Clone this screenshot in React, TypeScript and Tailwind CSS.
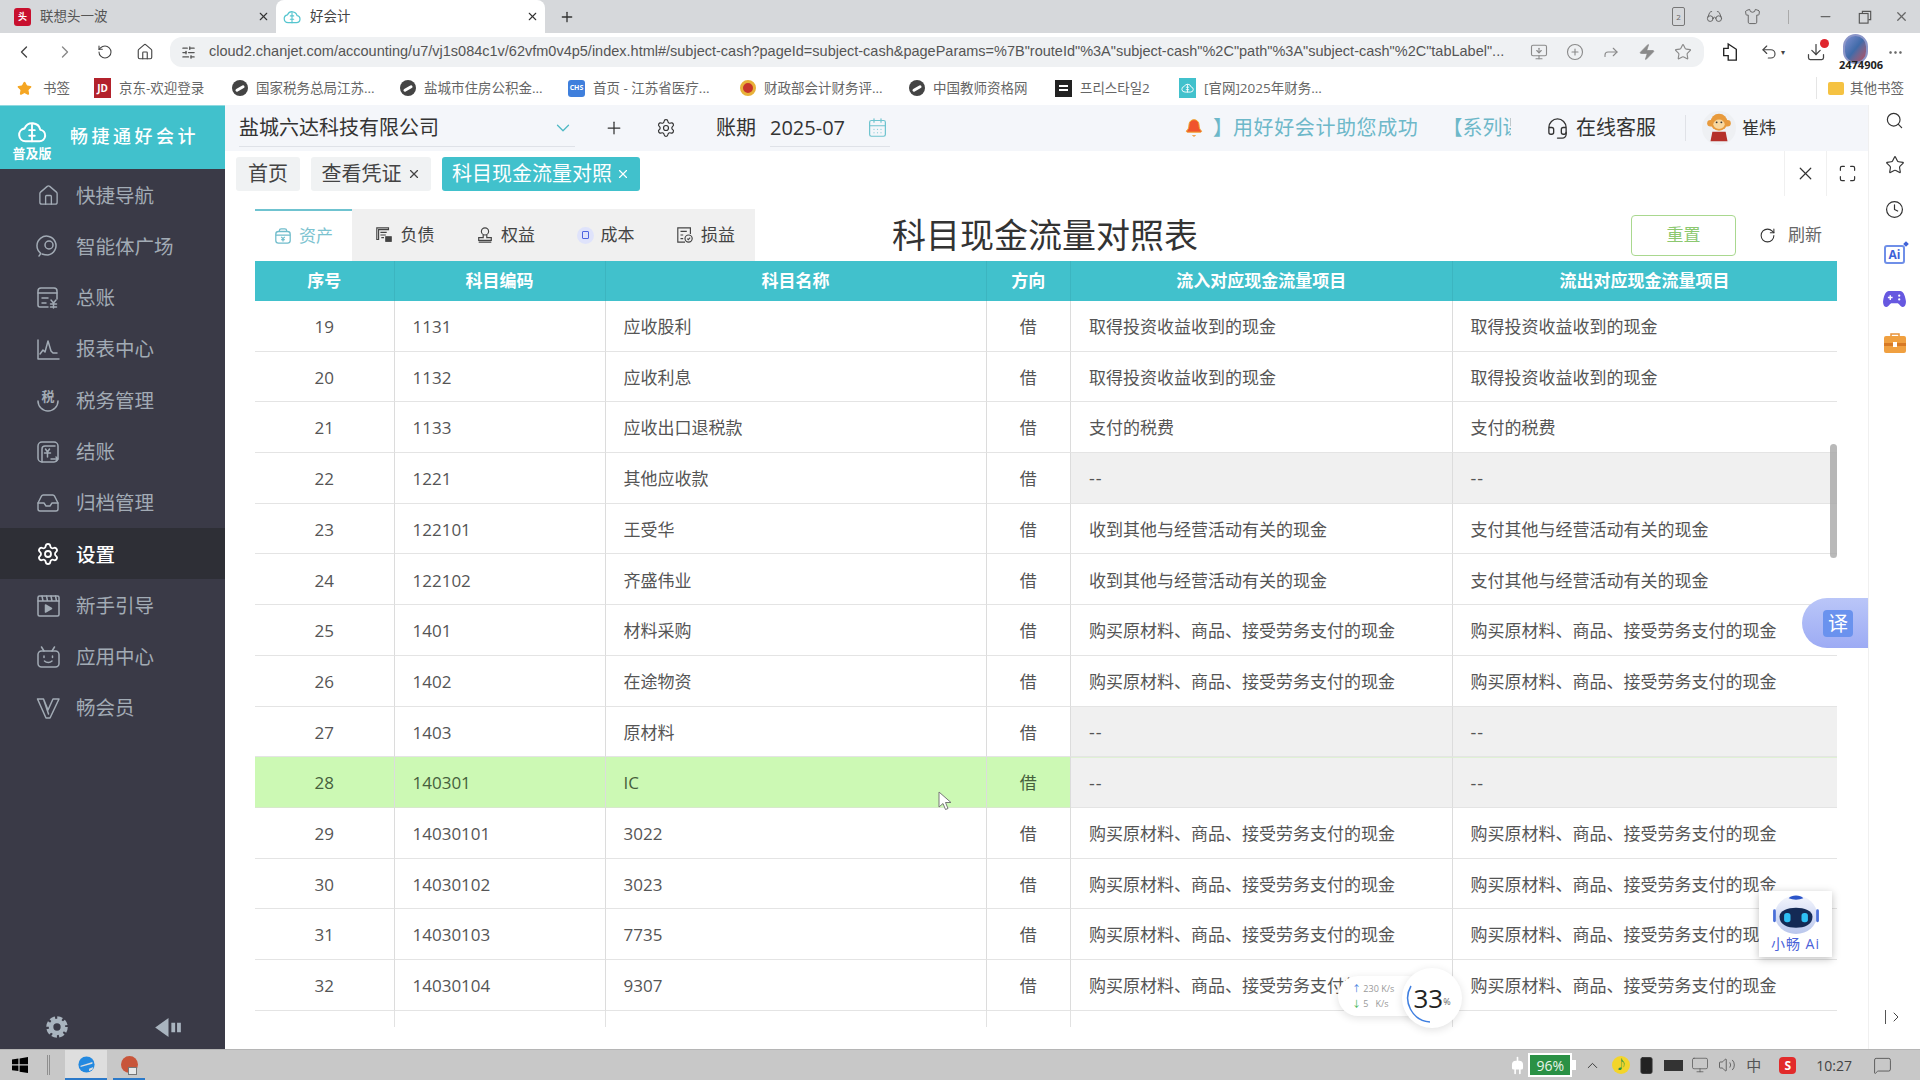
import React from "react";
import {
  Bell,
  CalendarDays,
  ChevronDown,
  ChevronLeft,
  ChevronRight,
  ChevronUp,
  CirclePlus,
  Clock,
  Download,
  Ellipsis,
  Forward,
  Glasses,
  Headset,
  House,
  Inbox,
  Maximize,
  MessageSquare,
  Minus,
  Monitor,
  MonitorDown,
  Plug,
  Plus,
  RotateCw,
  Search,
  Settings,
  Shirt,
  SlidersHorizontal,
  Smartphone,
  Star,
  Undo2,
  Volume2,
  X,
  Zap,
} from "lucide-react";

const FONT = "[font-family:'Open_Sans','Noto_Sans_CJK_SC','Noto_Sans_CJK_KR',sans-serif]";

const CloudMark = ({ className, stroke }: { className: string; stroke: string }) => (
  <svg viewBox="0 0 32 28" className={className} fill="none" stroke={stroke} strokeWidth="2.2" strokeLinecap="round" strokeLinejoin="round">
    <path d="M9 24a7 7 0 0 1-1-13.9A9 9 0 0 1 25 11.5 6.3 6.3 0 0 1 24 24Z" />
    <path d="M16 6v18M13 12h6M13 18h6" strokeWidth="2" />
  </svg>
);

const ic = { fill: "none", stroke: "currentColor", strokeWidth: 1.5, strokeLinecap: "round", strokeLinejoin: "round" } as const;

const navIcons: Record<string, React.ReactNode> = {
  home: <House size={23} strokeWidth={1.4} />,
  agent: (
    <svg viewBox="0 0 24 24" className="w-[24px] h-[24px]" {...ic}>
      <path d="M3 22c1-1 1.5-2 1.5-3A9.5 9.5 0 1 1 12 21c-2 0-4-.3-6-1" />
      <circle cx="13" cy="11" r="4" />
    </svg>
  ),
  ledger: (
    <svg viewBox="0 0 24 24" className="w-[24px] h-[24px]" {...ic}>
      <path d="M12 21H4a2 2 0 0 1-2-2V5a3 3 0 0 1 3-3h13a3 3 0 0 1 3 3v8" />
      <path d="M2 7h19M6 12h6M6 17h4M15 14l2.5 3 2.5-3M14.5 18h6M14.500 21h6M17.500 17v5" />
    </svg>
  ),
  report: (
    <svg viewBox="0 0 24 24" className="w-[24px] h-[24px]" {...ic}>
      <path d="M2 3v19h21" />
      <path d="M4 17l3-4 2 2 3-11 3 10 2 2h4" />
    </svg>
  ),
  tax: (
    <svg viewBox="0 0 24 24" className="w-[24px] h-[24px]" {...ic}>
      <path d="M2 13a10 10 0 0 0 20 0" />
      <text x="12" y="13" textAnchor="middle" fontSize="13" fontWeight="700" fill="currentColor" stroke="none">税</text>
    </svg>
  ),
  close: (
    <svg viewBox="0 0 24 24" className="w-[24px] h-[24px]" {...ic}>
      <rect x="2" y="2" width="20" height="20" rx="4" />
      <path d="M6 22V9a3 3 0 0 1 3-3h10M9.500 9l2 3 2-3M8.500 13h6M11.500 12v5M15 19h7m-2-2 2 2-2 2" />
    </svg>
  ),
  archive: <Inbox size={24} strokeWidth={1.4} />,
  settings: <Settings size={24} strokeWidth={1.8} />,
  guide: (
    <svg viewBox="0 0 24 24" className="w-[24px] h-[24px]" {...ic}>
      <rect x="2" y="2" width="21" height="20" rx="1.500" />
      <path d="M2 7h21M6 2l1 5M10.500 2l1 5M15 2l1 5M19.500 2l1 5" />
      <path d="M9.500 11l6 3.500-6 3.500Z" fill="currentColor" />
    </svg>
  ),
  app: (
    <svg viewBox="0 0 24 24" className="w-[24px] h-[24px]" {...ic}>
      <rect x="2" y="6" width="21" height="16" rx="3.500" />
      <path d="M8 6 5.500 2M16 6l2.500-4M8 11v1.500M16.500 11v1.500M8.500 16c2 2 5.500 2 7.500 0" />
    </svg>
  ),
  vip: (
    <svg viewBox="0 0 24 24" className="w-[24px] h-[24px]" {...ic}>
      <path d="M1.500 3h6L12 14l5-11h6l-9 19h-4ZM7.500 3l5 15" />
    </svg>
  ),
};

const navItems = [
  { label: "快捷导航", icon: "home" },
  { label: "智能体广场", icon: "agent" },
  { label: "总账", icon: "ledger" },
  { label: "报表中心", icon: "report" },
  { label: "税务管理", icon: "tax" },
  { label: "结账", icon: "close" },
  { label: "归档管理", icon: "archive" },
  { label: "设置", icon: "settings", active: true },
  { label: "新手引导", icon: "guide" },
  { label: "应用中心", icon: "app" },
  { label: "畅会员", icon: "vip" },
];

const Dot = ({ className }: { className: string }) => (
  <span className={`w-[16px] h-[16px] rounded-full flex items-center justify-center shrink-0 ${className}`}>
    <span className="w-[10px] h-[3px] bg-white rounded-full -rotate-[30deg]" />
  </span>
);

const bookmarks = [
  { label: "京东-欢迎登录", cls: "ml-[24px] w-[112px]", icon: <span className="w-[17px] h-[20px] bg-[#b3222c] text-white text-[10px] font-bold flex items-center justify-center shrink-0">JD</span> },
  { label: "国家税务总局江苏...", cls: "ml-[26px] w-[144px]", icon: <Dot className="bg-[#444]" /> },
  { label: "盐城市住房公积金...", cls: "ml-[24px] w-[145px]", icon: <Dot className="bg-[#444]" /> },
  { label: "首页 - 江苏省医疗...", cls: "ml-[23px] w-[148px]", icon: <span className="w-[17px] h-[17px] rounded-[3px] bg-[#3f7fdc] text-white text-[7px] font-bold flex items-center justify-center shrink-0">CHS</span> },
  { label: "财政部会计财务评...", cls: "ml-[24px] w-[146px]", icon: <span className="w-[16px] h-[16px] rounded-full bg-[#c7352a] border-[3px] border-[#e8b23a] shrink-0" /> },
  { label: "中国教师资格网", cls: "ml-[23px] w-[122px]", icon: <Dot className="bg-[#444]" /> },
  { label: "프리스타일2", cls: "ml-[24px] w-[100px]", icon: <span className="w-[17px] h-[17px] bg-[#222] border-2 border-[#222] flex flex-col gap-[2px] justify-center px-[2px] shrink-0"><span className="h-[2px] bg-white" /><span className="h-[2px] bg-white" /></span> },
  { label: "[官网]2025年财务...", cls: "ml-[24px] w-[145px]", icon: <span className="w-[17px] h-[20px] bg-[#41c1cc] flex items-center justify-center shrink-0"><CloudMark className="w-[13px] h-[12px]" stroke="#fff" /></span> },
];

type Row = { no: number; code: string; name: string; flow: string; out: string; empty?: boolean; hit?: boolean };

const INVEST = "取得投资收益收到的现金";
const BUY = "购买原材料、商品、接受劳务支付的现金";
const rows: Row[] = [
  { no: 19, code: "1131", name: "应收股利", flow: INVEST, out: INVEST },
  { no: 20, code: "1132", name: "应收利息", flow: INVEST, out: INVEST },
  { no: 21, code: "1133", name: "应收出口退税款", flow: "支付的税费", out: "支付的税费" },
  { no: 22, code: "1221", name: "其他应收款", flow: "--", out: "--", empty: true },
  { no: 23, code: "122101", name: "王受华", flow: "收到其他与经营活动有关的现金", out: "支付其他与经营活动有关的现金" },
  { no: 24, code: "122102", name: "齐盛伟业", flow: "收到其他与经营活动有关的现金", out: "支付其他与经营活动有关的现金" },
  { no: 25, code: "1401", name: "材料采购", flow: BUY, out: BUY },
  { no: 26, code: "1402", name: "在途物资", flow: BUY, out: BUY },
  { no: 27, code: "1403", name: "原材料", flow: "--", out: "--", empty: true },
  { no: 28, code: "140301", name: "IC", flow: "--", out: "--", empty: true, hit: true },
  { no: 29, code: "14030101", name: "3022", flow: BUY, out: BUY },
  { no: 30, code: "14030102", name: "3023", flow: BUY, out: BUY },
  { no: 31, code: "14030103", name: "7735", flow: BUY, out: BUY },
  { no: 32, code: "14030104", name: "9307", flow: BUY, out: BUY },
];

const GRID = "grid grid-cols-[139.500px_211px_381px_84.500px_381.500px_384px]";

const headers = ["序号", "科目编码", "科目名称", "方向", "流入对应现金流量项目", "流出对应现金流量项目"];

const sheetTabs = [
  { label: "资产", w: "w-[97px]", active: true, icon: (
    <svg viewBox="0 0 20 20" className="w-[18px] h-[18px]" fill="none" stroke="#6fbccb" strokeWidth="1.400">
      <rect x="2" y="5" width="16" height="13" rx="3" /><path d="M6 5V4a2 2 0 0 1 2-2h4a2 2 0 0 1 2 2v1M2 9h16M8 11l2 2 2-2M10 13v3M8 14h4" />
    </svg>
  ) },
  { label: "负债", w: "w-[104px]", icon: (
    <svg viewBox="0 0 20 20" className="w-[20px] h-[18px]" fill="none" stroke="#444" strokeWidth="1.300">
      <path d="M2 2h13v2H4v11H2ZM6 7h7M6 10h6M7 13h3" /><rect x="12" y="12" width="6" height="5" fill="#444" />
    </svg>
  ) },
  { label: "权益", w: "w-[99px]", icon: (
    <svg viewBox="0 0 20 20" className="w-[18px] h-[18px]" fill="none" stroke="#444" strokeWidth="1.300">
      <circle cx="10" cy="6" r="4" /><path d="M8 10v3H3v3h14v-3h-5v-3M3 18h14" />
    </svg>
  ) },
  { label: "成本", w: "w-[101px]", icon: (
    <span className="w-[17px] h-[17px] rounded-full bg-[#dfe3fb] flex items-center justify-center">
      <span className="w-[7px] h-[8px] rounded-[1px] border border-[#4f66e0]" />
    </span>
  ) },
  { label: "损益", w: "w-[99px]", icon: (
    <svg viewBox="0 0 20 20" className="w-[18px] h-[18px]" fill="none" stroke="#444" strokeWidth="1.300">
      <path d="M10 18H2V2h14v7M5 6h7M5 10h3M5 14h3" /><circle cx="14" cy="14" r="4" /><path d="m12.500 14 1.200 1.200 2-2.200" />
    </svg>
  ) },
];

const Robot = () => (
  <svg viewBox="0 0 60 48" className="w-[56px] h-[44px]">
    <defs>
      <linearGradient id="robotShell" x1="0" y1="0" x2="0" y2="1">
        <stop offset="0" stopColor="#f4f6fd" />
        <stop offset="1" stopColor="#b9c6ec" />
      </linearGradient>
    </defs>
    <ellipse cx="30" cy="26" rx="23" ry="21" fill="url(#robotShell)" />
    <path d="M22 8c3-4 13-4 16 0-5 2-11 2-16 0Z" fill="#2c55c9" />
    <path d="M12 28c0-13 36-13 36 0 0 9-9 12-18 12s-18-3-18-12Z" fill="#142a55" />
    <rect x="17" y="24" width="7" height="10" rx="3" fill="#2ec0f5" />
    <rect x="36" y="24" width="7" height="10" rx="3" fill="#2ec0f5" />
    <rect x="5" y="20" width="3" height="14" rx="1.500" fill="#4a6fd8" />
    <rect x="52" y="20" width="3" height="14" rx="1.500" fill="#4a6fd8" />
  </svg>
);

const Monkey = () => (
  <svg viewBox="0 0 36 36" className="w-[34px] h-[34px]">
    <circle cx="18" cy="18" r="18" fill="#eef0f3" />
    <circle cx="9" cy="13" r="3.500" fill="#e89a3c" />
    <circle cx="27" cy="13" r="3.500" fill="#e89a3c" />
    <circle cx="18" cy="12" r="9" fill="#e89a3c" />
    <ellipse cx="18" cy="14" rx="6" ry="5" fill="#f8d79e" />
    <circle cx="15.500" cy="12" r="1" fill="#333" />
    <circle cx="20.500" cy="12" r="1" fill="#333" />
    <path d="M11 22h14l2 10H9Z" fill="#b5302a" />
  </svg>
);

export default function App() {
  return (
    <div className={`relative w-[1920px] h-[1080px] overflow-hidden bg-white flex flex-col ${FONT}`}>
      {/* browser tabs */}
      <div className="h-[33px] bg-[#d6d8db] flex items-stretch shrink-0 text-[13.500px] text-[#555]">
        <div className="w-[276px] flex items-center pl-[14px] pr-[6px]">
          <span className="w-[17px] h-[18px] rounded-[3px] bg-[#c8102e] text-white text-[9px] font-bold flex items-center justify-center">头</span>
          <span className="ml-[9px]">联想头一波</span>
          <X size={13} className="ml-auto text-[#333]" />
        </div>
        <div className="w-[269px] bg-white rounded-t-[8px] flex items-center pl-[7px] pr-[6px] text-[#444]">
          <CloudMark className="w-[18px] h-[16px]" stroke="#55c5cf" />
          <span className="ml-[9px]">好会计</span>
          <X size={13} className="ml-auto text-[#333]" />
        </div>
        <div className="ml-[14px] flex items-center text-[#333]">
          <Plus size={16} />
        </div>
        <div className="ml-auto flex items-center text-[#666]">
          <span className="w-[13px] h-[19px] border border-[#777] rounded-[2px] text-[8px] flex items-center justify-center">2</span>
          <Glasses size={17} strokeWidth={1.400} className="ml-[21px]" />
          <Shirt size={17} strokeWidth={1.400} className="ml-[21px]" />
          <span className="ml-[27px] w-px h-[14px] bg-[#aaa]" />
          <Minus size={15} className="ml-[29px]" />
          <svg viewBox="0 0 16 16" className="w-[14px] h-[14px] ml-[25px]" fill="none" stroke="#555" strokeWidth="1.300">
            <rect x="1.500" y="4" width="10" height="11" /><path d="M5 4V1.500h9.500V11H12" />
          </svg>
          <X size={15} className="ml-[22px] mr-[11px]" />
        </div>
      </div>

      {/* address bar */}
      <div className="h-[38px] bg-white flex items-center shrink-0 text-[#444]">
        <ChevronLeft size={20} strokeWidth={1.600} className="ml-[14px]" />
        <ChevronRight size={20} strokeWidth={1.600} className="ml-[21px] text-[#888]" />
        <RotateCw size={16} strokeWidth={1.600} className="ml-[22px] -scale-x-100" />
        <House size={18} strokeWidth={1.500} className="ml-[23px]" />
        <div className="ml-[16px] w-[1534px] h-[30px] rounded-[12px] bg-[#eff1f3] flex items-center">
          <SlidersHorizontal size={15} className="ml-[11px] text-[#555]" />
          <span className="ml-[13px] w-[1302px] truncate text-[14.500px] text-[#555] [font-family:'Liberation_Sans',sans-serif]">
            cloud2.chanjet.com/accounting/u7/vj1s084c1v/62vfm0v4p5/index.html#/subject-cash?pageId=subject-cash&pageParams=%7B"routeId"%3A"subject-cash"%2C"path"%3A"subject-cash"%2C"tabLabel"...
          </span>
          <div className="ml-[19px] flex items-center gap-[18px] text-[#8a8a8a]">
            <MonitorDown size={18} strokeWidth={1.500} />
            <CirclePlus size={18} strokeWidth={1.500} />
            <Forward size={18} strokeWidth={1.500} />
            <Zap size={18} fill="#8a8a8a" strokeWidth={1} />
            <Star size={18} strokeWidth={1.500} />
          </div>
        </div>
        <svg viewBox="0 0 20 24" className="ml-[17px] w-[18px] h-[22px]" fill="none" stroke="#222" strokeWidth="1.500">
          <path d="M3 8h5V3l9 6v12H8v-5H3Z" />
        </svg>
        <Undo2 size={18} strokeWidth={1.500} className="ml-[21px]" />
        <span className="ml-[3px] text-[8px]">▾</span>
        <div className="relative ml-[21px]">
          <Download size={20} strokeWidth={1.500} />
          <span className="absolute -top-[3px] right-[-3px] w-[9px] h-[9px] rounded-full bg-[#e0262e]" />
        </div>
        <div className="relative ml-[17px] w-[26px] h-[36px]">
          <span className="block w-[25px] h-[30px] rounded-full bg-gradient-to-br from-[#7f8fd0] via-[#3f6aa8] to-[#b5465a] border-2 border-[#8c96c8]" />
          <span className="absolute left-[-4px] top-[24px] text-[11px] font-bold text-[#222] leading-[14px]">2474906</span>
        </div>
        <Ellipsis size={17} strokeWidth={1.500} className="ml-[18px] text-[#555]" />
      </div>

      {/* bookmarks */}
      <div className="h-[34px] bg-white flex items-center shrink-0 text-[13.500px] text-[#666]">
        <Star size={15} fill="#f5a623" stroke="#f5a623" className="ml-[17px]" />
        <span className="ml-[11px]">书签</span>
        {bookmarks.map((b) => (
          <div key={b.label} className={`flex items-center gap-[8px] shrink-0 ${b.cls}`}>
            {b.icon}
            <span className="whitespace-nowrap">{b.label}</span>
          </div>
        ))}
        <span className="ml-auto w-px h-[22px] bg-[#e5e5e5]" />
        <span className="ml-[11px] w-[16px] h-[13px] rounded-[2px] bg-[#f5c242]" />
        <span className="ml-[6px] mr-[16px]">其他书签</span>
      </div>

      <div className="flex-1 flex min-h-0">
        {/* sidebar */}
        <aside className="w-[225px] shrink-0 bg-[#3a3a47] flex flex-col">
          <div className="h-[64px] bg-[#41c1cc] border-t border-[#8fd9e0] flex text-white shrink-0">
            <div className="w-[70px] flex flex-col items-center pt-[13px]">
              <CloudMark className="w-[30px] h-[26px] ml-[-6px]" stroke="#fff" />
              <span className="text-[13px] font-bold leading-[16px] ml-[-6px]">普及版</span>
            </div>
            <span className="text-[18px] font-medium leading-[60px] tracking-[3.500px] whitespace-nowrap">畅捷通好会计</span>
          </div>
          {navItems.map((item) => (
            <div
              key={item.label}
              className={`h-[51.300px] shrink-0 flex items-center pl-[36px] pt-[1px] gap-[16px] text-[19.500px] ${item.active ? "bg-[#2e2f36] text-white font-medium" : "text-[#a2abb5]"}`}
            >
              <span className="w-[24px] flex justify-center">{navIcons[item.icon]}</span>
              {item.label}
            </div>
          ))}
          <div className="mt-auto h-[44px] flex items-center shrink-0">
            <svg viewBox="0 0 24 24" className="ml-[46px] w-[22px] h-[22px]" fill="none" stroke="#a9b4bf">
              <circle cx="12" cy="12" r="6.500" strokeWidth="5" />
              <circle cx="12" cy="12" r="10" strokeWidth="3.500" strokeDasharray="5.500 2.350" />
            </svg>
            <svg viewBox="0 0 28 20" className="ml-[87px] w-[27px] h-[19px]" fill="#a9b4bf">
              <path d="M14 0v20L0 10Z" /><rect x="17" y="5" width="4" height="10" /><rect x="23" y="5" width="4" height="10" />
            </svg>
          </div>
        </aside>

        {/* main */}
        <main className="flex-1 min-w-0 flex flex-col border-r border-[#f0f0f0]">
          <header className="h-[46px] bg-[#f4f6fa] flex items-center shrink-0 text-[20px] text-[#333]">
            <div className="ml-[14px] w-[336px] h-[38px] border-b border-[#dfe2e8] flex items-center">
              盐城六达科技有限公司
              <ChevronDown size={22} strokeWidth={1.400} className="ml-auto mr-[1px] text-[#4fb9c4]" />
            </div>
            <Plus size={20} strokeWidth={1.500} className="ml-[29px]" />
            <Settings size={20} strokeWidth={1.400} className="ml-[32px]" />
            <span className="ml-[40px]">账期</span>
            <div className="ml-[14px] w-[120px] h-[38px] border-b border-[#dfe2e8] flex items-center justify-between">
              2025-07
              <CalendarDays size={21} strokeWidth={1.400} className="mr-[2px] text-[#6fc4cf]" />
            </div>
            <Bell size={20} fill="#f0532d" stroke="#f0a32d" strokeWidth={1.200} className="ml-[294px]" />
            <div className="ml-[9px] w-[298px] overflow-hidden whitespace-nowrap text-[#6db8c9]">
              】<span className="tracking-[0.600px]">用好好会计助您成功</span><span className="ml-[24px]">【系列课堂</span>
            </div>
            <Headset size={23} strokeWidth={1.400} className="ml-[35px]" />
            <span className="ml-[7px]">在线客服</span>
            <span className="ml-[29px] w-px h-[26px] bg-[#e0e2e7]" />
            <span className="ml-[16px]"><Monkey /></span>
            <span className="ml-[6px] text-[17px]">崔炜</span>
          </header>

          <div className="h-[45px] flex items-center shrink-0 text-[20px] text-[#444]">
            <span className="ml-[11px] w-[64px] h-[34px] rounded-[3px] bg-[#f0f2f3] flex items-center justify-center">首页</span>
            <span className="ml-[11px] w-[120px] h-[34px] rounded-[3px] bg-[#f0f2f3] flex items-center justify-center gap-[5px]">
              查看凭证<X size={14} />
            </span>
            <span className="ml-[11px] w-[198px] h-[34px] rounded-[3px] bg-[#41c1cc] text-white flex items-center justify-center gap-[4px]">
              科目现金流量对照<X size={14} />
            </span>
            <div className="ml-auto h-full flex text-[#333]">
              <span className="w-[42px] border-l border-[#f0f0f0] flex items-center justify-center"><X size={21} strokeWidth={1.400} /></span>
              <span className="w-[42px] border-l border-[#f0f0f0] flex items-center justify-center"><Maximize size={19} strokeWidth={1.500} /></span>
            </div>
          </div>

          <div className="flex-1 min-h-0 pl-[30px] pr-[31px]">
            {/* tabs, title and buttons */}
            <div className="relative mt-[13px] h-[52px] flex items-end text-[17px] text-[#444]">
              {sheetTabs.map((t) => (
                <div
                  key={t.label}
                  className={`${t.w} h-[52px] flex items-center justify-center gap-[7px] ${t.active ? "bg-white text-[#7cc3d0] border-t-2 border-[#6fc3d0]" : "bg-[#f0f0f0]"}`}
                >
                  {t.icon}
                  {t.label}
                </div>
              ))}
              <h1 className="absolute left-[535px] w-[510px] top-0 text-center text-[34px] leading-[52px] text-[#333] font-normal">科目现金流量对照表</h1>
              <div className="ml-auto self-center flex items-center">
                <button className="w-[105px] h-[41px] rounded-[4px] border border-[#a9d88f] text-[#8cc870] text-[17px]">重置</button>
                <RotateCw size={17} strokeWidth={1.500} className="ml-[23px] text-[#333]" />
                <span className="ml-[12px] mr-[15px] text-[#666]">刷新</span>
              </div>
            </div>

            {/* table */}
            <div className="relative h-[766px] overflow-hidden text-[17px] text-[#555]">
              <div className={`${GRID} h-[40px] bg-[#41c1cc] text-white font-bold`}>
                {headers.map((h) => (
                  <div key={h} className="flex items-center justify-center border-r border-[#3cb5c0] last:border-r-0">{h}</div>
                ))}
              </div>
              {rows.map((r) => (
                <div key={r.no} className={`${GRID} h-[50.700px]`}>
                  <Cell hit={r.hit} center>{r.no}</Cell>
                  <Cell hit={r.hit}>{r.code}</Cell>
                  <Cell hit={r.hit}>{r.name}</Cell>
                  <Cell hit={r.hit} center>借</Cell>
                  <Cell grey={r.empty} hitTop={r.hit}>{r.flow === "--" ? <span className="tracking-[1px] text-[18px]">--</span> : r.flow}</Cell>
                  <Cell grey={r.empty} hitTop={r.hit} last>{r.out === "--" ? <span className="tracking-[1px] text-[18px]">--</span> : r.out}</Cell>
                </div>
              ))}
              <div className={`${GRID} h-[50.700px]`}>
                {headers.map((h) => (
                  <div key={h} className="border-r border-[#e2e2e2] last:border-r-0" />
                ))}
              </div>
              <div className="absolute right-0 top-[183px] w-[7px] h-[114px] rounded-full bg-[#a8a8a8]/80" />
            </div>
          </div>
        </main>

        {/* right rail */}
        <aside className="w-[51px] shrink-0 flex flex-col items-center pt-[6px] text-[#333]">
          <div className="flex flex-col items-center gap-[25.500px]">
            <div className="h-[19px] flex items-center"><Search size={19} strokeWidth={1.500} /></div>
            <div className="h-[19px] flex items-center"><Star size={20} strokeWidth={1.400} /></div>
            <div className="h-[19px] flex items-center"><Clock size={19} strokeWidth={1.500} /></div>
            <div className="relative h-[19px] flex items-center">
              <span className="w-[21px] h-[19px] rounded-[3px] border-2 border-[#6f8fe8] text-[#3f62d8] text-[12px] font-bold leading-[15px] text-center">Ai</span>
              <span className="absolute -top-[3px] -right-[3px] w-[4px] h-[4px] rotate-45 bg-[#3f62d8]" />
            </div>
            <div className="h-[19px] flex items-center">
              <svg viewBox="0 0 24 18" className="w-[23px] h-[17px]">
                <path d="M6 1h12c3 0 5 4 6 10 .6 4-1 7-3.500 7-2 0-3-3-5-4H8.500c-2 1-3 4-5 4C1 18-.6 15 0 11 1 5 3 1 6 1Z" fill="#6658e0" />
                <path d="M5 8h5M7.500 5.500v5" stroke="#fff" strokeWidth="1.500" />
                <circle cx="17" cy="6" r="1.200" fill="#fff" /><circle cx="17" cy="10" r="1.200" fill="#fff" />
              </svg>
            </div>
            <div className="h-[19px] flex items-center">
              <svg viewBox="0 0 22 20" className="w-[22px] h-[20px]">
                <path d="M7 3V1h8v2" fill="none" stroke="#e8923a" strokeWidth="1.500" />
                <rect x="0" y="3" width="22" height="17" rx="2" fill="#f0a040" />
                <rect x="0" y="10" width="22" height="3" fill="#d87a25" />
                <rect x="9" y="9" width="4" height="5" fill="#fff" />
              </svg>
            </div>
          </div>
          <div className="mt-auto mb-[24px] flex items-center text-[#444]">
            <span className="w-px h-[14px] bg-[#555] mr-[2px]" />
            <ChevronRight size={16} strokeWidth={1.500} />
          </div>
        </aside>
      </div>

      {/* taskbar */}
      <div className="h-[31px] bg-[#c8c8c8] border-t border-[#b5b5b5] flex items-center shrink-0 text-[#333]">
        <svg viewBox="0 0 20 20" className="ml-[11px] w-[18px] h-[16px]" fill="#000">
          <path d="M0 3l8-1v7H0ZM9.500 2 20 0v9H9.500ZM0 10.500h8v7l-8-1ZM9.500 10.500H20V20L9.500 18.500Z" />
        </svg>
        <span className="ml-[18px] w-[3px] h-[20px] border-x border-[#8f8f8f]" />
        <span className="ml-[15px] w-[42px] h-full bg-[#dedede] border-b-2 border-[#2b79c9] flex items-center justify-center">
          <svg viewBox="0 0 20 20" className="w-[17px] h-[17px]">
            <circle cx="10" cy="10" r="9.500" fill="#2389e0" />
            <path d="M3 11.500 17 7v2L3 13Z" fill="#dedede" />
            <path d="M13 15l5-2-1 3-4 2Z" fill="#dedede" />
          </svg>
        </span>
        <span className="relative ml-[6px] w-[32px] h-full border-b-2 border-[#2b79c9] flex items-center justify-center">
          <span className="w-[17px] h-[17px] rounded-full bg-[#c8553a]" />
          <span className="absolute right-[8px] bottom-[3px] w-[9px] h-[8px] bg-[#e8e8e8] border border-[#777]" />
        </span>

        <div className="ml-auto flex items-center">
          <Plug size={19} fill="#fff" stroke="#fff" className="rotate-180 mr-[1px]" />
          <span className="w-[44px] h-[24px] border-2 border-white bg-[#2a9145] text-[#e8f5ea] text-[14px] flex items-center justify-center">96%</span>
          <span className="w-[4px] h-[10px] bg-white" />
          <ChevronUp size={17} strokeWidth={1.300} className="ml-[8px]" />
          <span className="ml-[11px] w-[18px] h-[18px] rounded-full bg-[#f3d52b] flex items-center justify-center text-[#2a9145] text-[12px]">♪</span>
          <Smartphone size={19} fill="#222" strokeWidth={1.200} className="ml-[7px]" />
          <span className="ml-[8px] w-[19px] h-[11px] bg-[#333]" />
          <Monitor size={18} strokeWidth={1} className="ml-[8px] text-[#555]" />
          <Volume2 size={18} strokeWidth={1} className="ml-[9px] text-[#444]" />
          <span className="ml-[10px] text-[15px] text-[#555]">中</span>
          <span className="ml-[18px] w-[17px] h-[17px] rounded-[4px] bg-[#e22b2b] text-white text-[12px] font-bold leading-[17px] text-center">S</span>
          <span className="ml-[20px] text-[14px] text-[#444]">10:27</span>
          <MessageSquare size={19} strokeWidth={1} className="ml-[21px] mr-[28px] text-[#444]" />
        </div>
      </div>

      {/* floating things */}
      <div className="absolute left-[1802px] top-[598px] w-[66px] h-[50px] rounded-l-[25px] bg-gradient-to-b from-[#bac6f8] to-[#9dabf4] flex items-center justify-center pl-[6px]">
        <span className="w-[30px] h-[27px] rounded-[4px] bg-[#6a92ee] text-white text-[20px] leading-[27px] text-center">译</span>
      </div>
      <div className="absolute left-[1759px] top-[891px] w-[73px] h-[66px] bg-white shadow-[0_2px_8px_rgba(0,0,0,0.25)] flex flex-col items-center">
        <Robot />
        <span className="text-[14px] leading-[18px] tracking-[1px] text-[#4a62d8] whitespace-nowrap">小畅 Ai</span>
      </div>
      <div className="absolute left-[1338px] top-[976px] w-[90px] h-[40px] rounded-[20px] bg-white shadow-[0_2px_8px_rgba(0,0,0,0.12)] pl-[14px] pt-[5px] text-[9px] leading-[15px] text-[#999]">
        <div><span className="text-[#3f7fe0]">↑</span> 230 K/s</div>
        <div><span className="text-[#35b54a]">↓</span> 5 &nbsp; K/s</div>
      </div>
      <div className="absolute left-[1402px] top-[968px] w-[60px] h-[60px] rounded-full bg-white shadow-[0_2px_8px_rgba(0,0,0,0.12)] flex items-center justify-center">
        <svg viewBox="0 0 60 60" className="absolute inset-0 w-[60px] h-[60px]" fill="none" stroke="#3f7fe0" strokeWidth="1.500">
          <path d="M9 18A24 24 0 0 0 28 54" />
        </svg>
        <span className="text-[26px] text-[#222] leading-none">33</span>
        <span className="text-[9px] text-[#666] mt-[8px]">%</span>
      </div>
      <svg viewBox="0 0 14 20" className="absolute left-[938px] top-[791px] w-[14px] h-[20px]" fill="#fff" stroke="#777" strokeWidth="1">
        <path d="M1 1v15l4-3.500 2.500 6 2.500-1-2.500-6H13Z" />
      </svg>
    </div>
  );
}

function Cell({ children, center, hit, hitTop, grey, last }: { children: React.ReactNode; center?: boolean; hit?: boolean; hitTop?: boolean; grey?: boolean; last?: boolean }) {
  return (
    <div
      className={`flex items-center border-b pt-[2px] whitespace-nowrap ${center ? "justify-center" : "pl-[18px]"} ${last ? "" : "border-r border-r-[#dcdcdc]"} ${hit ? "bg-[#ccf9b4] text-[#46603c] border-b-[#d8e8cc]" : "border-b-[#e4e4e4]"} ${hitTop ? "border-t border-t-[#dff0d4]" : ""} ${grey ? "bg-[#f0f0f0]" : ""}`}
    >
      {children}
    </div>
  );
}
